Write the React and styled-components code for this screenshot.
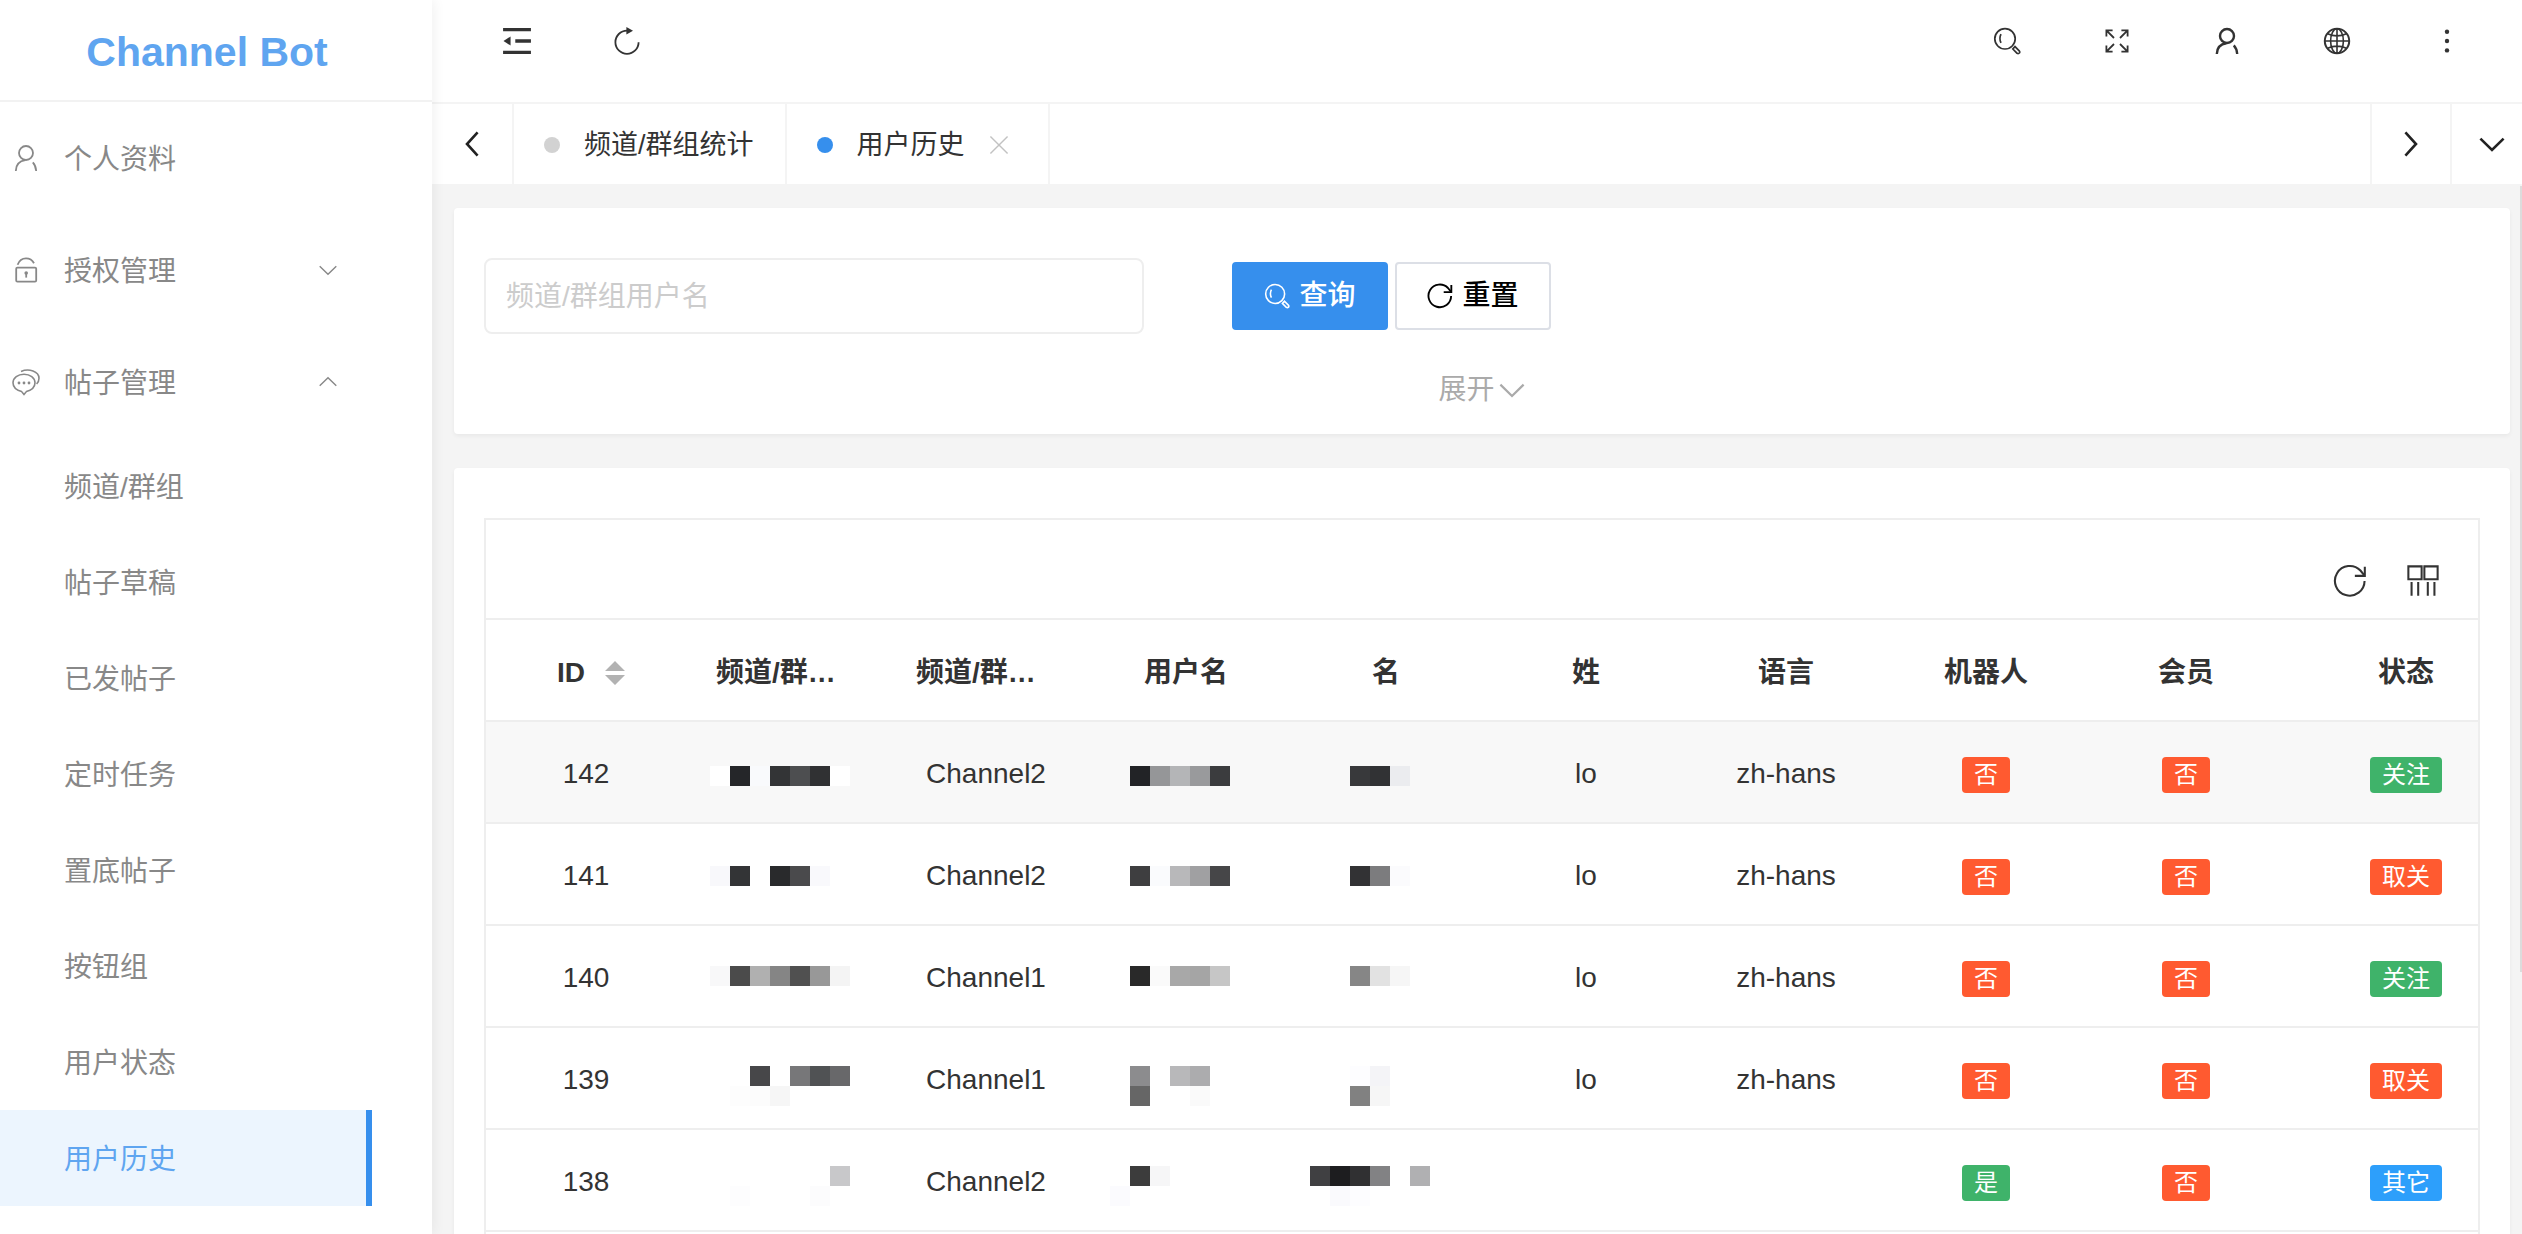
import React, { useState } from "react";
import styled, { createGlobalStyle } from "styled-components";

const GlobalStyle = createGlobalStyle`
  * {
    box-sizing: border-box;
  }
  body {
    margin: 0;
    overflow: hidden;
    background-color: #f4f4f4;
    color: #333;
    font-family: "Liberation Sans", "Noto Sans CJK SC", sans-serif;
    font-size: 28px;
    line-height: 40px;
  }
  button, input {
    font: inherit;
    color: inherit;
  }
  button {
    margin: 0;
    padding: 0;
    border: none;
    background: none;
    cursor: pointer;
  }
  svg {
    display: block;
    flex: none;
  }
`;

/* ---------- icons ---------- */

function Svg({ size = 28, stroke = 2, children }) {
  return (
    <svg
      width={size}
      height={size}
      viewBox="0 0 28 28"
      fill="none"
      stroke="currentColor"
      strokeWidth={stroke}
      aria-hidden="true"
    >
      {children}
    </svg>
  );
}

const SearchIcon = ({ size }) => (
  <Svg size={size} stroke={1.7}>
    <circle cx="12" cy="11.8" r="10.2" />
    <path d="M8 7.2 Q5.8 11.6 8 15.8" />
    <path d="M19.8 22 L24 26.2 Q25.4 27 26.4 26 Q27.2 25 26.2 23.8 L22 19.6 Z" />
  </Svg>
);

const ExpandIcon = () => (
  <Svg stroke={1.8}>
    <path d="M3.4 9.6 V3.4 H9.6 M3.4 3.4 L11 11" />
    <path d="M18.4 3.4 H24.6 V9.6 M24.6 3.4 L17 11" />
    <path d="M3.4 18.4 V24.6 H9.6 M3.4 24.6 L11 17" />
    <path d="M24.6 18.4 V24.6 H18.4 M24.6 24.6 L17 17" />
  </Svg>
);

const UserIcon = ({ stroke }) => (
  <Svg stroke={stroke}>
    <circle cx="14" cy="9" r="7" />
    <path d="M3.8 27 Q4 17.6 13.4 16.2 M20.8 18.4 Q23.8 21.6 24.2 27" />
  </Svg>
);

const GlobeIcon = () => (
  <Svg stroke={1.6}>
    <circle cx="14" cy="14" r="12.2" strokeWidth="2" />
    <ellipse cx="14" cy="14" rx="6.4" ry="12.2" />
    <path d="M14 2 V26 M2 14 H26 M4.6 6.8 Q14 11 23.4 6.8 M4.6 21.2 Q14 17 23.4 21.2" />
  </Svg>
);

const MoreIcon = () => (
  <Svg>
    <g fill="currentColor" stroke="none">
      <circle cx="14" cy="4.8" r="2.2" />
      <circle cx="14" cy="14" r="2.2" />
      <circle cx="14" cy="23.4" r="2.2" />
    </g>
  </Svg>
);

const FoldIcon = () => (
  <Svg size={30} stroke={3.2}>
    <path d="M1 3.4 H27 M12.4 14 H27 M1 24.6 H27" />
    <path d="M1.4 14 L8 9.8 V18.2 Z" fill="currentColor" stroke="none" />
  </Svg>
);

const ReloadIcon = () => (
  <Svg stroke={1.8}>
    <path d="M25.6 15.2 A11.6 11.6 0 1 1 14 3.6" />
    <path d="M13.4 0 L20 3.8 L13.4 7.6 Z" fill="currentColor" stroke="none" />
  </Svg>
);

const RefreshIcon = ({ size, stroke }) => (
  <Svg size={size} stroke={stroke}>
    <path d="M26 14 A12.2 12.2 0 1 1 22.6 5.4 L26 9.6" />
    <path d="M26.2 2.2 V9.8 H18" />
  </Svg>
);

const ColumnsIcon = () => (
  <Svg size={32} stroke={1.8}>
    <path d="M1.2 1.2 H12.8 V12.4 H1.2 Z M15.2 1.2 H26.8 V12.4 H15.2 Z" />
    <path d="M4 14.8 V27 M9.8 14.8 V27 M18.2 14.8 V27 M24 14.8 V27" />
  </Svg>
);

const LockIcon = () => (
  <Svg stroke={1.8}>
    <rect x="4.2" y="11.6" width="20" height="14" rx="1.2" />
    <path d="M5.6 8.8 Q8 2.4 14 2.4 Q19.4 2.4 22 7.2" />
    <circle cx="14.2" cy="17" r="1.8" fill="currentColor" stroke="none" />
    <path d="M14.2 17 V21.6" />
  </Svg>
);

const ChatIcon = () => (
  <Svg stroke={1.6}>
    <path d="M9.6 23.6 Q1 21.2 1 14.8 C1 9.6 6 6.2 12 6.2 C18 6.2 23 9.6 23 14.8 Q23 21.2 14.4 23.6 L12 26.4 Z" />
    <path d="M9 3.4 C17 0 27 3.4 27 10.2 Q27 13.6 24.6 16" />
    <g fill="currentColor" stroke="none">
      <circle cx="7" cy="15" r="1.4" />
      <circle cx="12" cy="15" r="1.4" />
      <circle cx="17" cy="15" r="1.4" />
    </g>
  </Svg>
);

const CloseIcon = () => (
  <Svg size={20} stroke={2}>
    <path d="M2 2 L26 26 M26 2 L2 26" />
  </Svg>
);

const chevrons = {
  left: "M19.6 2.4 L9 14 L19.6 25.6",
  right: "M8.4 2.4 L19 14 L8.4 25.6",
  down: "M2.4 8.6 L14 20 L25.6 8.6",
  up: "M2.4 19.4 L14 8 L25.6 19.4",
};

const Chevron = ({ to, size, stroke }) => (
  <Svg size={size} stroke={stroke}>
    <path d={chevrons[to]} />
  </Svg>
);

/* ---------- data ---------- */

const children = [
  "频道/群组",
  "帖子草稿",
  "已发帖子",
  "定时任务",
  "置底帖子",
  "按钮组",
  "用户状态",
  "用户历史",
];

const NO = { text: "否", color: "#ff5a30" };
const YES = { text: "是", color: "#3fb36a" };
const FOLLOW = { text: "关注", color: "#3fb36a" };
const UNFOLLOW = { text: "取关", color: "#ff5a30" };
const OTHER = { text: "其它", color: "#2d9ffb" };

// masked values: x of the first tile, then rows of tile colours
const rows = [
  {
    id: 142,
    channel: "Channel2",
    last: "lo",
    lang: "zh-hans",
    bot: NO,
    vip: NO,
    status: FOLLOW,
    top: 44,
    masks: [
      [24, ["#fff", "#252629", "#f9fafc", "#333436", "#4d4e50", "#303133", "#fff"]],
      [44, ["#222326", "#959698", "#b4b5b7", "#999a9c", "#3b3c3e"]],
      [64, ["#38393b", "#313234", "#ebecef"]],
    ],
  },
  {
    id: 141,
    channel: "Channel2",
    last: "lo",
    lang: "zh-hans",
    bot: NO,
    vip: NO,
    status: UNFOLLOW,
    top: 42,
    masks: [
      [24, ["#f8f8fb", "#333436", "", "#292a2c", "#4a4a4c", "#f9f9fc"]],
      [44, ["#3e3e40", "#fafbfd", "#b8b8ba", "#a0a0a2", "#464648"]],
      [64, ["#323234", "#7c7c7e", "#fbfbfd"]],
    ],
  },
  {
    id: 140,
    channel: "Channel1",
    last: "lo",
    lang: "zh-hans",
    bot: NO,
    vip: NO,
    status: FOLLOW,
    top: 40,
    masks: [
      [24, ["#f8f8f9", "#4b4b4b", "#b0b0b0", "#858585", "#505050", "#989898", "#f4f4f4"]],
      [44, ["#292929", "#fafafa", "#a8a8a8", "#a5a5a5", "#c6c6c6"]],
      [64, ["#868686", "#e2e2e2", "#f6f6f6"]],
    ],
  },
  {
    id: 139,
    channel: "Channel1",
    last: "lo",
    lang: "zh-hans",
    bot: NO,
    vip: NO,
    status: UNFOLLOW,
    top: 38,
    masks: [
      [44, ["", "#474749", "", "#777779", "#505254", "#68686a"], ["#fdfdfd", "#fcfcfc", "#f6f6f6"]],
      [44, ["#8c8c8e", "", "#b8b8ba", "#acacae"], ["#666", "", "", "#fafafa"]],
      [64, ["#fdfdff", "#f4f4f7"], ["#818181", "#f6f6f6"]],
    ],
  },
  {
    id: 138,
    channel: "Channel2",
    last: "",
    lang: "",
    bot: YES,
    vip: NO,
    status: OTHER,
    top: 36,
    masks: [
      [44, ["", "", "", "", "", "#c8c8ca"], ["#fdfdfe", "", "", "", "#fcfcfd"]],
      [24, ["", "#3c3c3c", "#f6f6f7"], ["#fbfbfe"]],
      [24, ["#404042", "#1d1d1f", "#303032", "#828284", "", "#b0b0b2"], ["", "#fafafd", "#fdfdff"]],
    ],
  },
];

/* ---------- components ---------- */

function Mask({ top, data }) {
  const [left, ...lines] = data;
  return (
    <svg width="200" height="100" viewBox="0 0 200 100" shapeRendering="crispEdges" aria-hidden="true">
      {lines.map((line, y) =>
        line.map(
          (fill, x) =>
            fill && (
              <rect key={`${y}-${x}`} x={left + x * 20} y={top + y * 20} width="20" height="20" fill={fill} />
            )
        )
      )}
    </svg>
  );
}

function Sidebar() {
  const [active, setActive] = useState("用户历史");
  return (
    <Side>
      <Logo>Channel Bot</Logo>
      <Nav>
        <NavItem href="#profile">
          <UserIcon stroke={1.8} />
          <span>个人资料</span>
        </NavItem>
        <NavItem href="#auth">
          <LockIcon />
          <span>授权管理</span>
          <Chevron to="down" size={20} stroke={2} />
        </NavItem>
        <NavItem href="#posts">
          <ChatIcon />
          <span>帖子管理</span>
          <Chevron to="up" size={20} stroke={2} />
        </NavItem>
        {children.map((name) => (
          <SubItem key={name} href="#posts" $active={name === active} onClick={() => setActive(name)}>
            {name}
          </SubItem>
        ))}
      </Nav>
    </Side>
  );
}

function TopBar() {
  return (
    <Header>
      <HeaderGroup>
        <HeaderButton aria-label="收起菜单">
          <FoldIcon />
        </HeaderButton>
        <HeaderButton aria-label="刷新">
          <ReloadIcon />
        </HeaderButton>
      </HeaderGroup>
      <HeaderGroup>
        <HeaderButton aria-label="搜索">
          <SearchIcon />
        </HeaderButton>
        <HeaderButton aria-label="全屏">
          <ExpandIcon />
        </HeaderButton>
        <HeaderButton aria-label="用户">
          <UserIcon stroke={2.4} />
        </HeaderButton>
        <HeaderButton aria-label="语言">
          <GlobeIcon />
        </HeaderButton>
        <HeaderButton aria-label="更多">
          <MoreIcon />
        </HeaderButton>
      </HeaderGroup>
    </Header>
  );
}

function TabBar() {
  return (
    <Tabs>
      <TabControl aria-label="向左" $width={82}>
        <Chevron to="left" size={28} stroke={2.6} />
      </TabControl>
      <Tab>
        <Dot $color="#d2d2d2" />
        <TabLink href="#stats">频道/群组统计</TabLink>
      </Tab>
      <Tab>
        <Dot $color="#368fed" />
        <TabLink href="#history">用户历史</TabLink>
        <TabClose aria-label="关闭">
          <CloseIcon />
        </TabClose>
      </Tab>
      <Spacer />
      <TabControl aria-label="向右" $width={80}>
        <Chevron to="right" size={28} stroke={2.6} />
      </TabControl>
      <TabMenu aria-label="标签菜单" $width={70}>
        <Chevron to="down" size={28} stroke={2.6} />
      </TabMenu>
    </Tabs>
  );
}

function SearchCard() {
  return (
    <Card>
      <SearchRow onSubmit={(e) => e.preventDefault()}>
        <TextInput type="text" placeholder="频道/群组用户名" aria-label="频道/群组用户名" />
        <Buttons>
          <Button type="submit" $primary>
            <SearchIcon size={26} />
            查询
          </Button>
          <Button type="reset">
            <RefreshIcon size={26} stroke={2} />
            重置
          </Button>
        </Buttons>
      </SearchRow>
      <ExpandRow>
        <ExpandButton>
          展开
          <Chevron to="down" size={28} stroke={2.2} />
        </ExpandButton>
      </ExpandRow>
    </Card>
  );
}

function HistoryCard() {
  return (
    <Card>
      <TableBox>
        <Toolbar>
          <button aria-label="刷新表格">
            <RefreshIcon size={34} stroke={1.7} />
          </button>
          <button aria-label="筛选列">
            <ColumnsIcon />
          </button>
        </Toolbar>
        <Table>
          <colgroup>
            {[200, 200, 200, 200, 200, 200, 200, 200, 200, 240].map((w, i) => (
              <col key={i} width={w} />
            ))}
          </colgroup>
          <thead>
            <tr>
              <Th>
                <Sortable>
                  ID
                  <SortArrows aria-label="排序">
                    <svg width="20" height="32" viewBox="0 0 20 32" fill="#b2b2b2" aria-hidden="true">
                      <path d="M0 14 L10 4 L20 14 Z M0 18 L10 28 L20 18 Z" />
                    </svg>
                  </SortArrows>
                </Sortable>
              </Th>
              <Th>频道/群组用户名</Th>
              <Th>频道/群组名称</Th>
              <Th>用户名</Th>
              <Th>名</Th>
              <Th>姓</Th>
              <Th>语言</Th>
              <Th>机器人</Th>
              <Th>会员</Th>
              <Th>状态</Th>
            </tr>
          </thead>
          <tbody>
            {rows.map((row, i) => (
              <Row key={row.id} $hover={i === 0}>
                <Td>{row.id}</Td>
                <MaskTd>
                  <Mask top={row.top} data={row.masks[0]} />
                </MaskTd>
                <Td>{row.channel}</Td>
                <MaskTd>
                  <Mask top={row.top} data={row.masks[1]} />
                </MaskTd>
                <MaskTd>
                  <Mask top={row.top} data={row.masks[2]} />
                </MaskTd>
                <Td>{row.last}</Td>
                <Td>{row.lang}</Td>
                <Td>
                  <Badge $color={row.bot.color}>{row.bot.text}</Badge>
                </Td>
                <Td>
                  <Badge $color={row.vip.color}>{row.vip.text}</Badge>
                </Td>
                <Td>
                  <Badge $color={row.status.color}>{row.status.text}</Badge>
                </Td>
              </Row>
            ))}
          </tbody>
        </Table>
      </TableBox>
    </Card>
  );
}

export default function App() {
  return (
    <Container>
      <GlobalStyle />
      <Sidebar />
      <Main>
        <TopBar />
        <TabBar />
        <Body>
          <Content>
            <SearchCard />
            <HistoryCard />
          </Content>
          <ScrollTrack>
            <ScrollThumb />
          </ScrollTrack>
        </Body>
      </Main>
    </Container>
  );
}

const Container = styled.div`
  height: 100vh;
  display: flex;
  overflow: hidden;
`;

const Side = styled.aside`
  width: 432px;
  flex: none;
  z-index: 1;
  background-color: #fff;
  box-shadow: 2px 0 12px rgba(0, 0, 0, 0.06);
`;

const Logo = styled.div`
  height: 102px;
  display: flex;
  align-items: center;
  justify-content: center;
  padding: 4px 18px 0 0;
  border-bottom: 2px solid #f2f2f2;
  color: #5fa5f0;
  font-size: 41px;
  font-weight: 600;
`;

const Nav = styled.nav`
  display: flex;
  flex-direction: column;
  width: 372px;
  color: #888;
  a {
    color: inherit;
    text-decoration: none;
  }
`;

const NavItem = styled.a`
  height: 112px;
  display: flex;
  align-items: center;
  gap: 24px;
  padding: 0 34px 0 12px;
  span {
    flex: 1;
    padding-top: 4px;
  }
`;

const SubItem = styled.a`
  height: 96px;
  display: flex;
  align-items: center;
  padding: 4px 0 0 64px;
  border-right: 6px solid ${({ $active }) => ($active ? "#368fed" : "transparent")};
  background-color: ${({ $active }) => ($active ? "#ecf5fe" : "transparent")};
  && {
    color: ${({ $active }) => ($active ? "#5fa5f0" : "#888")};
  }
`;

const Main = styled.main`
  flex: 1;
  min-width: 0;
  display: flex;
  flex-direction: column;
`;

const Header = styled.header`
  height: 104px;
  flex: none;
  display: flex;
  justify-content: space-between;
  padding: 0 20px 20px 30px;
  background-color: #fff;
  border-bottom: 2px solid #f4f4f4;
`;

const HeaderGroup = styled.div`
  display: flex;
`;

const HeaderButton = styled.button`
  width: 110px;
  display: flex;
  align-items: center;
  justify-content: center;
`;

const Tabs = styled.div`
  height: 80px;
  flex: none;
  display: flex;
  background-color: #fff;
  font-size: 27px;
`;

const TabControl = styled.button`
  width: ${({ $width }) => $width}px;
  display: flex;
  align-items: center;
  justify-content: center;
  border-right: 2px solid #f4f4f4;
  color: #222;
`;

const TabMenu = styled(TabControl)`
  padding-left: 10px;
  border-right: none;
`;

const Tab = styled.div`
  display: flex;
  align-items: center;
  gap: 24px;
  padding: 2px 31px 0 30px;
  border-right: 2px solid #f4f4f4;
`;

const TabLink = styled.a`
  color: inherit;
  text-decoration: none;
`;

const TabClose = styled.button`
  width: 28px;
  color: #c2c2c2;
`;

const Dot = styled.span`
  width: 16px;
  height: 16px;
  border-radius: 50%;
  background-color: ${({ $color }) => $color};
`;

const Spacer = styled.div`
  flex: 1;
  border-right: 2px solid #f4f4f4;
`;

const Body = styled.div`
  flex: 1;
  min-height: 0;
  display: flex;
`;

const Content = styled.div`
  flex: 1;
  min-width: 0;
  display: flex;
  flex-direction: column;
  gap: 34px;
  padding: 24px 10px 0 22px;
  overflow: hidden;
`;

const ScrollTrack = styled.div`
  width: 2px;
  padding-top: 2px;
`;

const ScrollThumb = styled.div`
  height: 75%;
  background-color: #dcdcdc;
`;

const Card = styled.section`
  flex: none;
  padding: 50px 30px 24px;
  border-radius: 4px;
  background-color: #fff;
  box-shadow: 0 2px 4px rgba(0, 0, 0, 0.05);
`;

const SearchRow = styled.form`
  display: flex;
  align-items: center;
  gap: 88px;
`;

const TextInput = styled.input`
  width: 660px;
  height: 76px;
  padding: 2px 20px 0;
  border: 2px solid #eee;
  border-radius: 8px;
  background-color: #fff;
  outline: none;
  &::placeholder {
    color: #ccc;
    opacity: 1;
  }
`;

const Buttons = styled.div`
  display: flex;
  gap: 7px;
`;

const Button = styled.button`
  width: 156px;
  height: 68px;
  display: flex;
  align-items: center;
  justify-content: center;
  gap: 9px;
  border-radius: 4px;
  border: 2px solid ${({ $primary }) => ($primary ? "#368fed" : "#dcdfe6")};
  background-color: ${({ $primary }) => ($primary ? "#368fed" : "#fff")};
  color: ${({ $primary }) => ($primary ? "#fff" : "#000")};
  font-weight: 500;
`;

const ExpandRow = styled.div`
  display: flex;
  justify-content: center;
  padding-top: 36px;
`;

const ExpandButton = styled.button`
  height: 40px;
  display: flex;
  align-items: center;
  gap: 3px;
  color: #aaa;
`;

const TableBox = styled.div`
  padding-bottom: 60px;
  border: 2px solid #eee;
  overflow: hidden;
`;

const Toolbar = styled.div`
  height: 100px;
  display: flex;
  align-items: center;
  justify-content: flex-end;
  gap: 40px;
  padding: 24px 39px 0;
  border-bottom: 2px solid #eee;
`;

const Table = styled.table`
  width: 2040px;
  table-layout: fixed;
  border-collapse: separate;
  border-spacing: 0;
`;

const Th = styled.th`
  height: 102px;
  padding: 6px 30px 0;
  border-bottom: 2px solid #eee;
  overflow: hidden;
  text-align: center;
  text-overflow: ellipsis;
  white-space: nowrap;
  font-weight: 600;
`;

const Sortable = styled.span`
  display: flex;
  align-items: center;
  justify-content: center;
  gap: 20px;
`;

const SortArrows = styled.button`
  margin-right: -10px;
`;

const Row = styled.tr`
  background-color: ${({ $hover }) => ($hover ? "#f8f8f8" : "#fff")};
`;

const Td = styled.td`
  height: 102px;
  padding: 4px 30px 0;
  border-bottom: 2px solid #eee;
  text-align: center;
  white-space: nowrap;
`;

const MaskTd = styled(Td)`
  padding: 0;
`;

const Badge = styled.span`
  display: inline-block;
  padding: 0 12px;
  border-radius: 4px;
  background-color: ${({ $color }) => $color};
  color: #fff;
  font-size: 24px;
  line-height: 36px;
`;
